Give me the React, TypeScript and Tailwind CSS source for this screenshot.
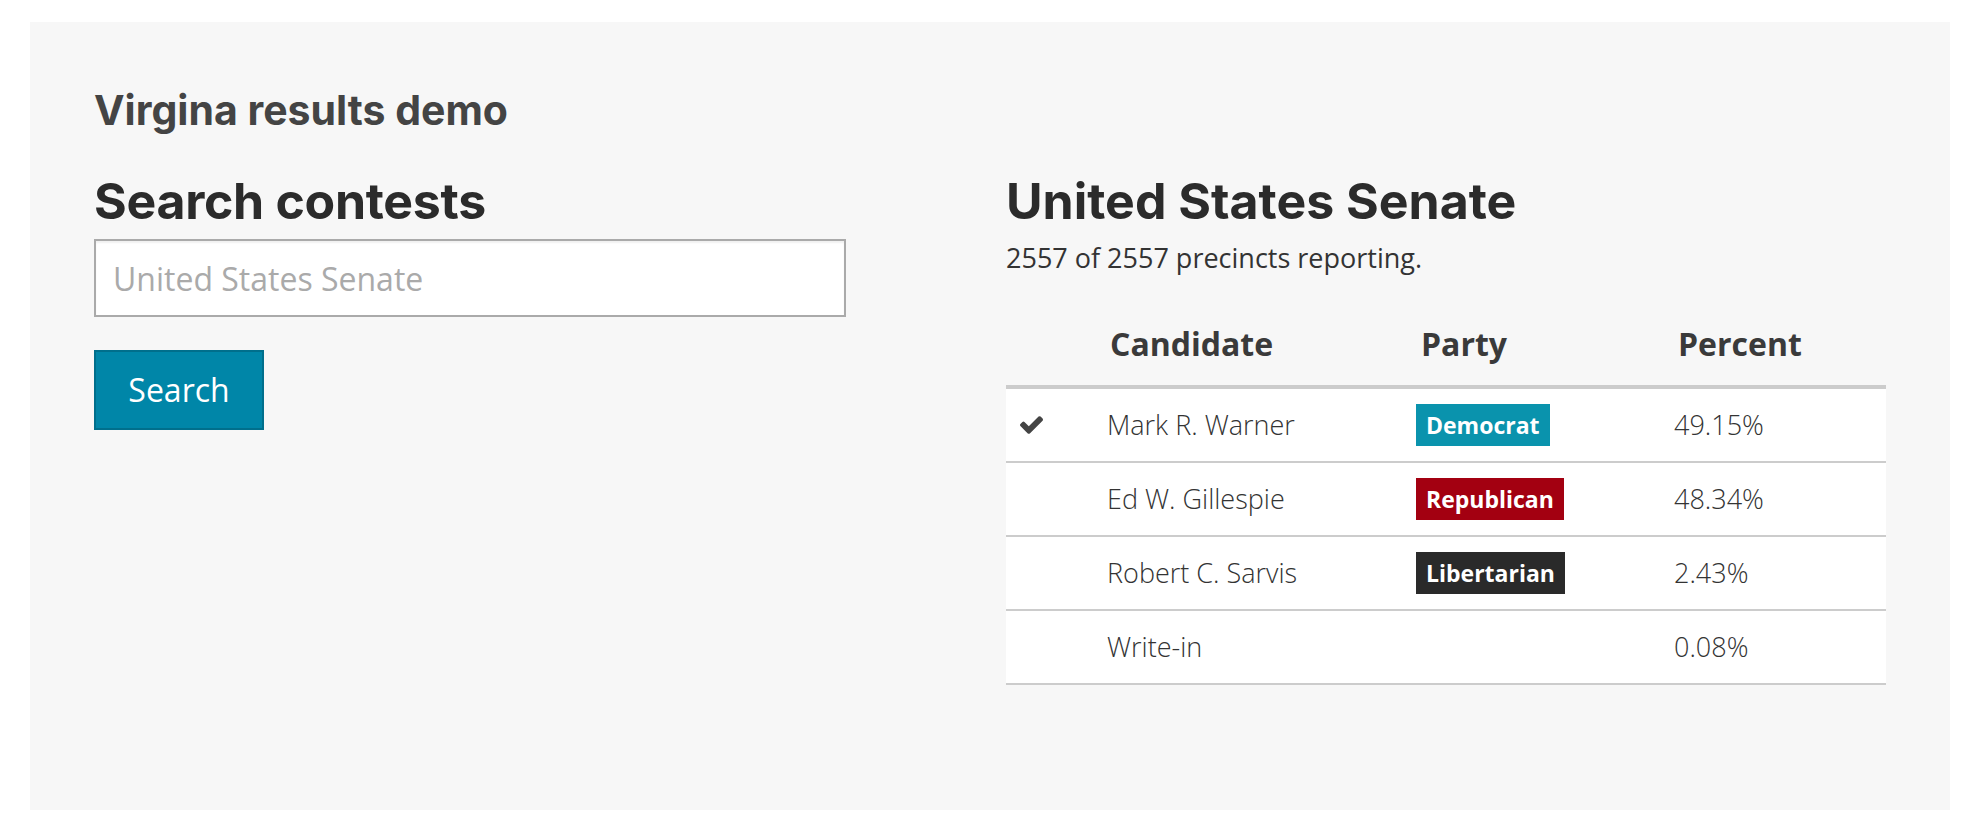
import React from "react";

const rows = [
  { win: true, name: "Mark R. Warner", party: "Democrat", color: "bg-[#0a93ad]", pct: "49.15%" },
  { win: false, name: "Ed W. Gillespie", party: "Republican", color: "bg-[#a30011]", pct: "48.34%" },
  { win: false, name: "Robert C. Sarvis", party: "Libertarian", color: "bg-[#2a2a2a]", pct: "2.43%" },
  { win: false, name: "Write-in", party: "", color: "", pct: "0.08%" },
];

function Check() {
  return (
    <svg width="23" height="18" viewBox="121 334 1550 1188" className="block">
      <path
        fill="#444444"
        d="M1671 566q0 40-28 68l-724 724-136 136q-28 28-68 28t-68-28l-136-136-362-362q-28-28-28-68t28-68l136-136q28-28 68-28t68 28l294 295 656-657q28-28 68-28t68 28l136 136q28 28 28 68z"
      />
    </svg>
  );
}

export default function App() {
  const sans = "font-['Open_Sans',sans-serif]";
  const head = "font-['Inter','Lato',sans-serif]";
  return (
    <div className="w-[1970px] h-[834px] bg-white pl-[30px] pr-[20px] pt-[22px]">
      <div className="h-[788px] bg-[#f7f7f7] pl-[64px] pr-[64px] pt-[68px]">
        <h3 className={`${head} font-bold text-[41px] leading-[40px] h-[40px] text-[#444444]`}>
          Virgina results demo
        </h3>
        <div className="grid grid-cols-2 gap-x-[32px] mt-[43px]">
          <div className="flex flex-col">
            <h1 className={`${head} font-bold text-[50px] leading-[56px] h-[56px] text-[#2b2b2b] tracking-[-0.3px]`}>
              Search contests
            </h1>
            <input
              className={`${sans} mt-[10px] w-[752px] h-[78px] bg-white border-2 border-[#aaaaaa] shadow-[inset_0_2px_2px_rgba(0,0,0,0.06)] pl-[17px] text-[32px] text-[#333] placeholder:text-[#aaaaaa] outline-none`}
              placeholder="United States Senate"
            />
            <button
              className={`${sans} mt-[33px] w-[170px] h-[80px] bg-[#0086a8] border-2 border-[#006f8c] text-white text-[32px] leading-none flex items-center justify-center`}
            >
              Search
            </button>
          </div>
          <div className="flex flex-col">
            <h2 className={`${head} font-bold text-[50px] leading-[56px] h-[56px] text-[#2b2b2b]`}>
              United States Senate
            </h2>
            <p className={`${sans} mt-[11px] text-[27px] leading-[36px] h-[36px] text-[#333333]`}>
              2557 of 2557 precincts reporting.
            </p>
            <div className={`${sans} mt-[32px]`}>
              <div className="grid grid-cols-[86px_309px_258px_1fr] h-[81px] pb-[5px] items-center border-b-4 border-[#cccccc] text-[32px] font-bold text-[#3a3a3a]">
                <div />
                <div className="pl-[18px]">Candidate</div>
                <div className="pl-[20px]">Party</div>
                <div className="pl-[19px]">Percent</div>
              </div>
              {rows.map((r) => (
                <div
                  key={r.name}
                  className="grid grid-cols-[86px_309px_258px_1fr] h-[74px] items-center bg-white border-b-2 border-[#cccccc] text-[27px] font-light text-[#333333]"
                >
                  <div className="pl-[14px]">{r.win ? <Check /> : null}</div>
                  <div className="pl-[15px]">{r.name}</div>
                  <div className="pl-[15px]">
                    {r.party ? (
                      <span
                        className={`${r.color} inline-flex items-center h-[42px] px-[10px] text-white font-bold text-[23px] leading-none`}
                      >
                        {r.party}
                      </span>
                    ) : null}
                  </div>
                  <div className="pl-[15px]">{r.pct}</div>
                </div>
              ))}
            </div>
          </div>
        </div>
      </div>
    </div>
  );
}
